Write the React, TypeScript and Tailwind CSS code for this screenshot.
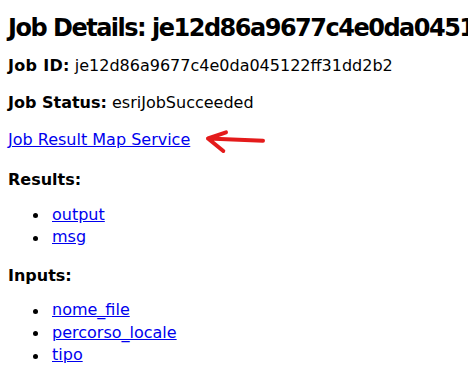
import React from "react";

const font = { fontFamily: '"DejaVu Sans", Verdana, sans-serif' };

function Bullet({ label }: { label: string }) {
  return (
    <li className="flex items-center leading-[22.5px]">
      <span className="w-[5px] h-[5px] rounded-full bg-black shrink-0 mt-[2px]" />
      <a href="#" className="ml-[14px] text-[#0000ee] underline">
        {label}
      </a>
    </li>
  );
}

export default function App() {
  return (
    <div
      className="w-[468px] h-[368px] overflow-hidden bg-white text-black pl-[8px] pt-[14px] text-[16px]"
      style={font}
    >
      <h2 className="text-[24px] leading-[28px] font-bold whitespace-nowrap tracking-[-1.5px]">
        Job Details: je12d86a9677c4e0da045122ff31dd2b2
      </h2>
      <p className="mt-[12px] leading-[23px] whitespace-nowrap">
        <b className="tracking-[0.3px]">Job ID:</b> je12d86a9677c4e0da045122ff31dd2b2
      </p>
      <p className="mt-[14px] leading-[23px] whitespace-nowrap">
        <b>Job Status:</b> esriJobSucceeded
      </p>
      <p className="relative mt-[14px] leading-[23px] whitespace-nowrap">
        <a href="#" className="text-[#0000ee] underline">
          Job Result Map Service
        </a>
        <svg
          className="absolute left-[196px] top-0"
          width="64"
          height="28"
          viewBox="0 0 64 28"
          fill="none"
        >
          <path
            d="M59 12.7 L4 10.5 M22 4.3 L4 10.5 L19.3 23"
            stroke="#e41b1b"
            strokeWidth="4"
            strokeLinecap="round"
            strokeLinejoin="round"
          />
        </svg>
      </p>
      <h4 className="mt-[17px] leading-[23px] font-bold">Results:</h4>
      <ul className="mt-[12.5px] pl-[25px]">
        <Bullet label="output" />
        <Bullet label="msg" />
      </ul>
      <h4 className="mt-[15.5px] leading-[23px] font-bold">Inputs:</h4>
      <ul className="mt-[12px] pl-[25px]">
        <Bullet label="nome_file" />
        <Bullet label="percorso_locale" />
        <Bullet label="tipo" />
      </ul>
    </div>
  );
}
